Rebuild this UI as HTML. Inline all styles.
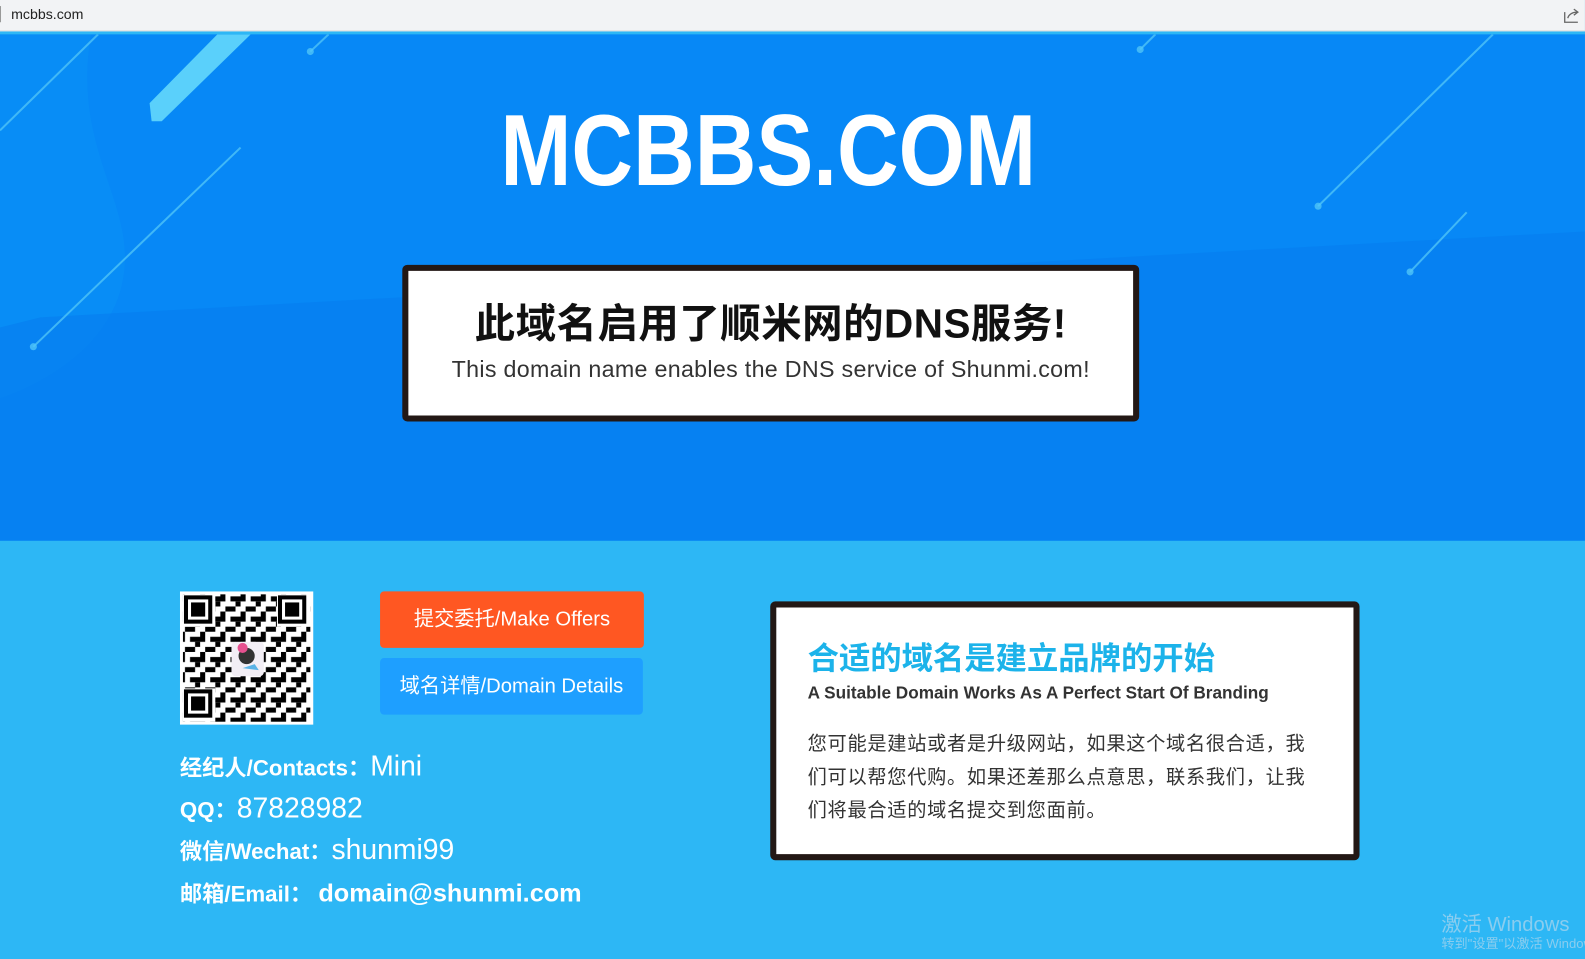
<!DOCTYPE html>
<html><head><meta charset="utf-8"><style>
*{margin:0;padding:0;box-sizing:border-box}
body{width:1585px;height:959px;overflow:hidden;font-family:"Liberation Sans","Noto Sans CJK SC",sans-serif;position:relative;background:#2db7f5}
#w{position:absolute;left:0;top:0;width:1568px;height:949px;transform:scale(1.0108);transform-origin:0 0}
.bar{position:absolute;left:0;top:0;width:1568px;height:31px;background:#f2f3f5;border-bottom:1px solid #ddd}
.bar span{position:absolute;left:11px;top:6px;font-size:14px;color:#222}
.bar i{position:absolute;left:0;top:6px;width:1px;height:16px;background:#999}
.hero{position:absolute;left:0;top:34px;width:1568px;height:501px;background:#0788f6;overflow:hidden}
.box1{position:absolute;left:398px;top:262px;width:729px;height:155px;background:#fff;border:6px solid #231815;border-radius:5px;text-align:center}
.box1 h1{font-size:40px;font-weight:bold;color:#111;margin-top:30px;line-height:46px;letter-spacing:0.5px}
.box1 p{font-size:23px;color:#333;margin-top:8px;letter-spacing:0.3px}
.btn{position:absolute;left:376px;width:261px;height:56px;border-radius:4px;color:#fff;font-size:20px;text-align:center;line-height:56px}
.c{position:absolute;left:178px;color:#fff;font-weight:bold;font-size:22px;white-space:nowrap}
.c b{font-weight:normal;font-size:28px}
.box2{position:absolute;left:762px;top:595px;width:583px;height:256px;background:#fff;border:6px solid #231815;border-radius:5px;padding-left:31px}
.box2 h2{font-size:31px;color:#1cb3ea;margin-top:33px;line-height:36px}
.box2 h3{font-size:17px;color:#333;margin-top:6px;font-weight:bold}
.box2 p{font-size:19px;color:#333;line-height:33px;margin-top:24px;width:495px;letter-spacing:0.7px}
.wm{position:absolute;left:1426px;top:898px;color:rgba(200,220,235,.6);font-size:20px}
.wm2{position:absolute;left:1426px;top:923px;color:rgba(200,220,235,.6);font-size:13px;white-space:nowrap}
</style></head><body><div id="w">
<div class="bar"><i></i><span>mcbbs.com</span>
<svg style="position:absolute;left:1546px;top:6px" width="18" height="18" viewBox="0 0 18 18" fill="none" stroke="#666" stroke-width="1.3"><path d="M2 6v10h13"/><path d="M5 12c1-4 5-6 9-6M11 3l4 3-4 3"/></svg></div>
<div class="hero">
<svg width="1568" height="501" style="position:absolute;left:0;top:0">
<path d="M0 0 L90 0 C70 120 140 170 120 250 C100 330 0 360 0 360Z" fill="#0a91f5" opacity=".5"/>
<path d="M40 280 L1568 195 L1568 501 L0 501 L0 290Z" fill="#0579ee" opacity=".5"/>
<g stroke="#4fc4f8" stroke-width="2" opacity=".8"><line x1="0" y1="95" x2="97" y2="0"/><line x1="33" y1="309" x2="238" y2="112"/><line x1="307" y1="17" x2="325" y2="0"/><line x1="1128" y1="15" x2="1143" y2="0"/><line x1="1304" y1="170" x2="1477" y2="0"/><line x1="1395" y1="235" x2="1451" y2="176"/></g>
<g fill="#4fc4f8" opacity=".8"><circle cx="33" cy="309" r="3.5"/><circle cx="307" cy="17" r="3.5"/><circle cx="1128" cy="15" r="3.5"/><circle cx="1304" cy="170" r="3.5"/><circle cx="1395" cy="235" r="3.5"/></g>
<path d="M148 68 L215 0 L248 0 L160 86 L150 86Z" fill="#5ad0fb"/>
<text x="495" y="149" font-family="Liberation Sans" font-weight="bold" font-size="100" fill="#fff" textLength="530" lengthAdjust="spacingAndGlyphs">MCBBS.COM</text>
</svg>
</div>
<div class="box1"><h1>此域名启用了顺米网的DNS服务!</h1><p>This domain name enables the DNS service of Shunmi.com!</p></div>
<svg style="position:absolute;left:178px;top:585px" width="132" height="132" viewBox="0 0 132 132">
<defs><pattern id="q" width="20" height="20" patternUnits="userSpaceOnUse"><rect width="20" height="20" fill="#fff"/><rect x="0" y="0" width="5" height="10" fill="#000"/><rect x="10" y="5" width="10" height="5" fill="#000"/><rect x="5" y="15" width="10" height="5" fill="#000"/><rect x="15" y="10" width="5" height="5" fill="#000"/></pattern></defs>
<rect width="132" height="132" fill="#fff"/><rect x="3" y="3" width="126" height="126" fill="url(#q)"/>
<g><rect x="3" y="3" width="32" height="32" fill="#fff"/><rect x="4" y="4" width="28" height="28" fill="#000"/><rect x="8" y="8" width="20" height="20" fill="#fff"/><rect x="11" y="11" width="14" height="14" fill="#000"/></g>
<g transform="translate(96 0)"><rect x="0" y="3" width="33" height="32" fill="#fff"/><rect x="1" y="4" width="28" height="28" fill="#000"/><rect x="5" y="8" width="20" height="20" fill="#fff"/><rect x="8" y="11" width="14" height="14" fill="#000"/></g>
<g transform="translate(0 96)"><rect x="3" y="0" width="32" height="33" fill="#fff"/><rect x="4" y="1" width="28" height="28" fill="#000"/><rect x="8" y="5" width="20" height="20" fill="#fff"/><rect x="11" y="8" width="14" height="14" fill="#000"/></g>
<rect x="51" y="50" width="32" height="34" rx="4" fill="#f2eef5"/><circle cx="66" cy="64" r="8" fill="#333"/><circle cx="62" cy="56" r="5" fill="#e6518f"/><path d="M62 76 l12 -4 4 6z" fill="#5ab3e6"/>
</svg>
<div class="btn" style="top:585px;background:#ff5722">提交委托/Make Offers</div>
<div class="btn" style="top:651px;background:#1e9fff;width:260px">域名详情/Domain Details</div>
<div class="c" style="top:742px">经纪人/Contacts：<b>Mini</b></div>
<div class="c" style="top:784px">QQ：<b>87828982</b></div>
<div class="c" style="top:825px">微信/Wechat：<b>shunmi99</b></div>
<div class="c" style="top:867px">邮箱/Email： <b style="font-weight:bold;font-size:25px">domain@shunmi.com</b></div>
<div class="box2"><h2>合适的域名是建立品牌的开始</h2><h3>A Suitable Domain Works As A Perfect Start Of Branding</h3><p>您可能是建站或者是升级网站，如果这个域名很合适，我们可以帮您代购。如果还差那么点意思，联系我们，让我们将最合适的域名提交到您面前。</p></div>
<div class="wm">激活 Windows</div><div class="wm2">转到"设置"以激活 Windows</div>
</div></body></html>
